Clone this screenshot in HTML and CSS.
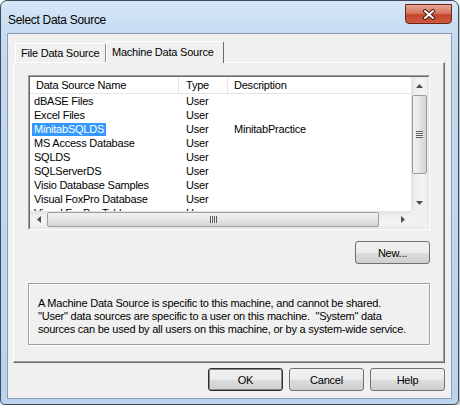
FILE: index.html
```html
<!DOCTYPE html>
<html lang="en">
<head>
    <meta charset="UTF-8">
    <title>Select Data Source</title>
    <link rel="stylesheet" href="styles.css">
</head>
<body>
    <div class="window">
        <div class="titlebar">
            <span class="title">Select Data Source</span>
            <div class="close">
                <svg width="14" height="11" viewBox="0 0 14 11">
                    <path d="M3 2 L11 9 M11 2 L3 9" stroke="#4a1a12" stroke-width="4" stroke-linecap="round"/>
                    <path d="M3 2 L11 9 M11 2 L3 9" stroke="#fff" stroke-width="2" stroke-linecap="round"/>
                </svg>
            </div>
        </div>

        <div class="client">
            <div class="tabs">
                <div class="tab">File Data Source</div>
                <div class="tab active">Machine Data Source</div>
            </div>

            <div class="panel">
                <div class="listview">
                    <div class="lv-inner">
                        <div class="lv-top">
                            <div class="lv-list">
                                <div class="lv-header">
                                    <div class="col name">Data Source Name</div>
                                    <div class="col type">Type</div>
                                    <div class="col desc">Description</div>
                                </div>
                                <div class="row"><div class="col name"><span>dBASE Files</span></div><div class="col type">User</div><div class="col desc"></div></div>
                                <div class="row"><div class="col name"><span>Excel Files</span></div><div class="col type">User</div><div class="col desc"></div></div>
                                <div class="row"><div class="col name"><span class="selected">MinitabSQLDS</span></div><div class="col type">User</div><div class="col desc">MinitabPractice</div></div>
                                <div class="row"><div class="col name"><span>MS Access Database</span></div><div class="col type">User</div><div class="col desc"></div></div>
                                <div class="row"><div class="col name"><span>SQLDS</span></div><div class="col type">User</div><div class="col desc"></div></div>
                                <div class="row"><div class="col name"><span>SQLServerDS</span></div><div class="col type">User</div><div class="col desc"></div></div>
                                <div class="row"><div class="col name"><span>Visio Database Samples</span></div><div class="col type">User</div><div class="col desc"></div></div>
                                <div class="row"><div class="col name"><span>Visual FoxPro Database</span></div><div class="col type">User</div><div class="col desc"></div></div>
                                <div class="row"><div class="col name"><span>Visual FoxPro Tables</span></div><div class="col type">User</div><div class="col desc"></div></div>
                            </div>
                            <div class="vscroll">
                                <div class="arrow">
                                    <svg width="7" height="4" viewBox="0 0 7 4"><polygon points="3.5,0 7,4 0,4" fill="#4d4d4d"/></svg>
                                </div>
                                <div class="vtrack">
                                    <div class="vthumb"><div class="vgrip"></div></div>
                                </div>
                                <div class="arrow">
                                    <svg width="7" height="4" viewBox="0 0 7 4"><polygon points="0,0 7,0 3.5,4" fill="#4d4d4d"/></svg>
                                </div>
                            </div>
                        </div>
                        <div class="lv-bottom">
                            <div class="hscroll">
                                <div class="arrow">
                                    <svg width="4" height="7" viewBox="0 0 4 7"><polygon points="4,0 4,7 0,3.5" fill="#4d4d4d"/></svg>
                                </div>
                                <div class="htrack">
                                    <div class="hthumb"><div class="hgrip"></div></div>
                                </div>
                                <div class="arrow">
                                    <svg width="4" height="7" viewBox="0 0 4 7"><polygon points="0,0 4,3.5 0,7" fill="#4d4d4d"/></svg>
                                </div>
                            </div>
                            <div class="corner"></div>
                        </div>
                    </div>
                </div>

                <div class="new-row">
                    <button class="btn">New...</button>
                </div>

                <div class="info">A Machine Data Source is specific to this machine, and cannot be shared.<br>"User" data sources are specific to a user on this machine.&nbsp; "System" data<br>sources can be used by all users on this machine, or by a system-wide service.</div>
            </div>

            <div class="buttons">
                <button class="btn default">OK</button>
                <button class="btn">Cancel</button>
                <button class="btn">Help</button>
            </div>
        </div>
    </div>
</body>
</html>
```

FILE: styles.css
```css
* {
    box-sizing: border-box;
}

body {
    margin: 0;
    background: #fff;
    font-family: "Liberation Sans", Arial, sans-serif;
    font-size: 11px;
    letter-spacing: -0.22px;
    color: #000;
}

.window {
    width: 459px;
    height: 405px;
    border: 1px solid #3c4a5a;
    border-radius: 7px 7px 5px 5px;
    background: linear-gradient(#d5e6f7, #c3daf1 40px, #bad3ec);
    padding: 0 6px 5px;
    display: flex;
    flex-direction: column;
    box-shadow: 1px 2px 3px rgba(0, 0, 0, 0.35);
}

.titlebar {
    height: 32px;
    flex: none;
    display: flex;
    justify-content: space-between;
    align-items: flex-start;
}

.title {
    margin: 12px 0 0 1px;
    font-size: 12px;
    letter-spacing: -0.3px;
    line-height: 14px;
}

.close {
    width: 47px;
    height: 20px;
    margin-top: 3px;
    border: 1px solid #6a2418;
    border-radius: 0 0 4px 4px;
    background: linear-gradient(#e8a596, #d67760 45%, #c3452c 55%, #cd5c40);
    display: flex;
    justify-content: center;
    align-items: center;
}

.client {
    flex: 1;
    border: 1px solid #8a9db3;
    background: #f0f0f0;
    display: flex;
    flex-direction: column;
    padding: 7px 6px 0 5px;
}

.tabs {
    display: flex;
    align-items: flex-end;
    height: 21px;
    flex: none;
}

.tab {
    height: 19px;
    width: 91px;
    margin-left: 2px;
    padding-left: 5px;
    line-height: 18px;
    border: 1px solid #fff;
    border-bottom: none;
    border-right-color: #898989;
    border-radius: 2px 2px 0 0;
    background: #f0f0f0;
    white-space: nowrap;
}

.tab.active {
    height: 22px;
    width: 118px;
    margin-left: 0;
    margin-bottom: -1px;
    line-height: 20px;
    border-right-color: #696969;
    position: relative;
    z-index: 1;
}

.panel {
    height: 301px;
    flex: none;
    border: 1px solid;
    border-color: #fff #696969 #696969 #fff;
    box-shadow: inset -1px -1px 0 #a0a0a0;
    padding: 12px 0 0 14px;
}

.listview {
    width: 402px;
    height: 155px;
    border: 1px solid;
    border-color: #a0a0a0 #fff #fff #a0a0a0;
}

.lv-inner {
    height: 100%;
    border: 1px solid;
    border-color: #696969 #e3e3e3 #e3e3e3 #696969;
    display: flex;
    flex-direction: column;
    background: #fff;
}

.lv-top {
    flex: 1;
    display: flex;
    min-height: 0;
}

.lv-list {
    flex: 1;
    overflow: hidden;
    background: #fff;
}

.lv-header {
    height: 17px;
    display: flex;
    border-bottom: 1px solid #e5e5e5;
    line-height: 16px;
}

.lv-header .col {
    border-right: 1px solid #e5e5e5;
}

.row {
    display: flex;
    height: 14px;
    line-height: 14px;
}

.col {
    flex: none;
    white-space: nowrap;
}

.col.name {
    width: 149px;
    padding-left: 2px;
}

.lv-header .col.name {
    padding-left: 6px;
}

.col.name span {
    display: inline-block;
    padding: 0 2px;
    line-height: 13px;
}

.col.name span.selected {
    background: #3399ff;
    color: #fff;
}

.col.type {
    width: 49px;
    padding-left: 7px;
}

.col.desc {
    flex: 1;
    padding-left: 6px;
}

.lv-header .col.desc {
    border-right: none;
}

.vscroll {
    width: 17px;
    flex: none;
    display: flex;
    flex-direction: column;
    background: linear-gradient(to right, #e2e2e2, #efefef 30%, #f4f4f4 70%, #e9e9e9);
}

.arrow {
    width: 17px;
    height: 17px;
    flex: none;
    display: flex;
    justify-content: center;
    align-items: center;
}

.vtrack {
    flex: 1;
    padding: 1px 0 0 1px;
}

.vthumb {
    width: 15px;
    height: 79px;
    border: 1px solid #9d9d9d;
    border-radius: 2px;
    background: linear-gradient(to right, #f2f2f2, #e6e6e6 50%, #d2d2d2);
    display: flex;
    justify-content: center;
    align-items: center;
}

.vgrip {
    width: 7px;
    height: 7px;
    background: repeating-linear-gradient(#5a5a5a 0 1px, #f0f0f0 1px 2px);
}

.lv-bottom {
    height: 17px;
    flex: none;
    display: flex;
}

.hscroll {
    flex: 1;
    display: flex;
    background: linear-gradient(#e2e2e2, #efefef 30%, #f4f4f4 70%, #e9e9e9);
}

.htrack {
    flex: 1;
    padding-top: 1px;
}

.hthumb {
    width: 332px;
    height: 15px;
    border: 1px solid #9d9d9d;
    border-radius: 2px;
    background: linear-gradient(#f2f2f2, #e6e6e6 50%, #d2d2d2);
    display: flex;
    justify-content: center;
    align-items: center;
}

.hgrip {
    width: 7px;
    height: 7px;
    background: repeating-linear-gradient(to right, #5a5a5a 0 1px, #f0f0f0 1px 2px);
}

.corner {
    width: 17px;
    flex: none;
    background: #f0f0f0;
}

.new-row {
    width: 402px;
    margin-top: 11px;
    display: flex;
    justify-content: flex-end;
}

.btn {
    width: 75px;
    height: 23px;
    padding: 0;
    border: 1px solid #707070;
    border-radius: 3px;
    background: linear-gradient(#f2f2f2, #ebebeb 50%, #dddddd 51%, #cfcfcf);
    font-family: inherit;
    font-size: 11px;
    letter-spacing: -0.22px;
    color: #000;
}

.btn.default {
    border-color: #2d2d2d;
    box-shadow: inset 0 0 0 1px #8a8a8a;
}

.info {
    width: 402px;
    height: 62px;
    margin-top: 19px;
    border: 1px solid #a0a0a0;
    box-shadow: inset 1px 1px 0 #fff, 1px 1px 0 #fff;
    padding: 13px 0 0 9px;
    line-height: 13px;
    white-space: nowrap;
}

.buttons {
    margin-top: 5px;
    display: flex;
    justify-content: flex-end;
    gap: 6px;
}
```
